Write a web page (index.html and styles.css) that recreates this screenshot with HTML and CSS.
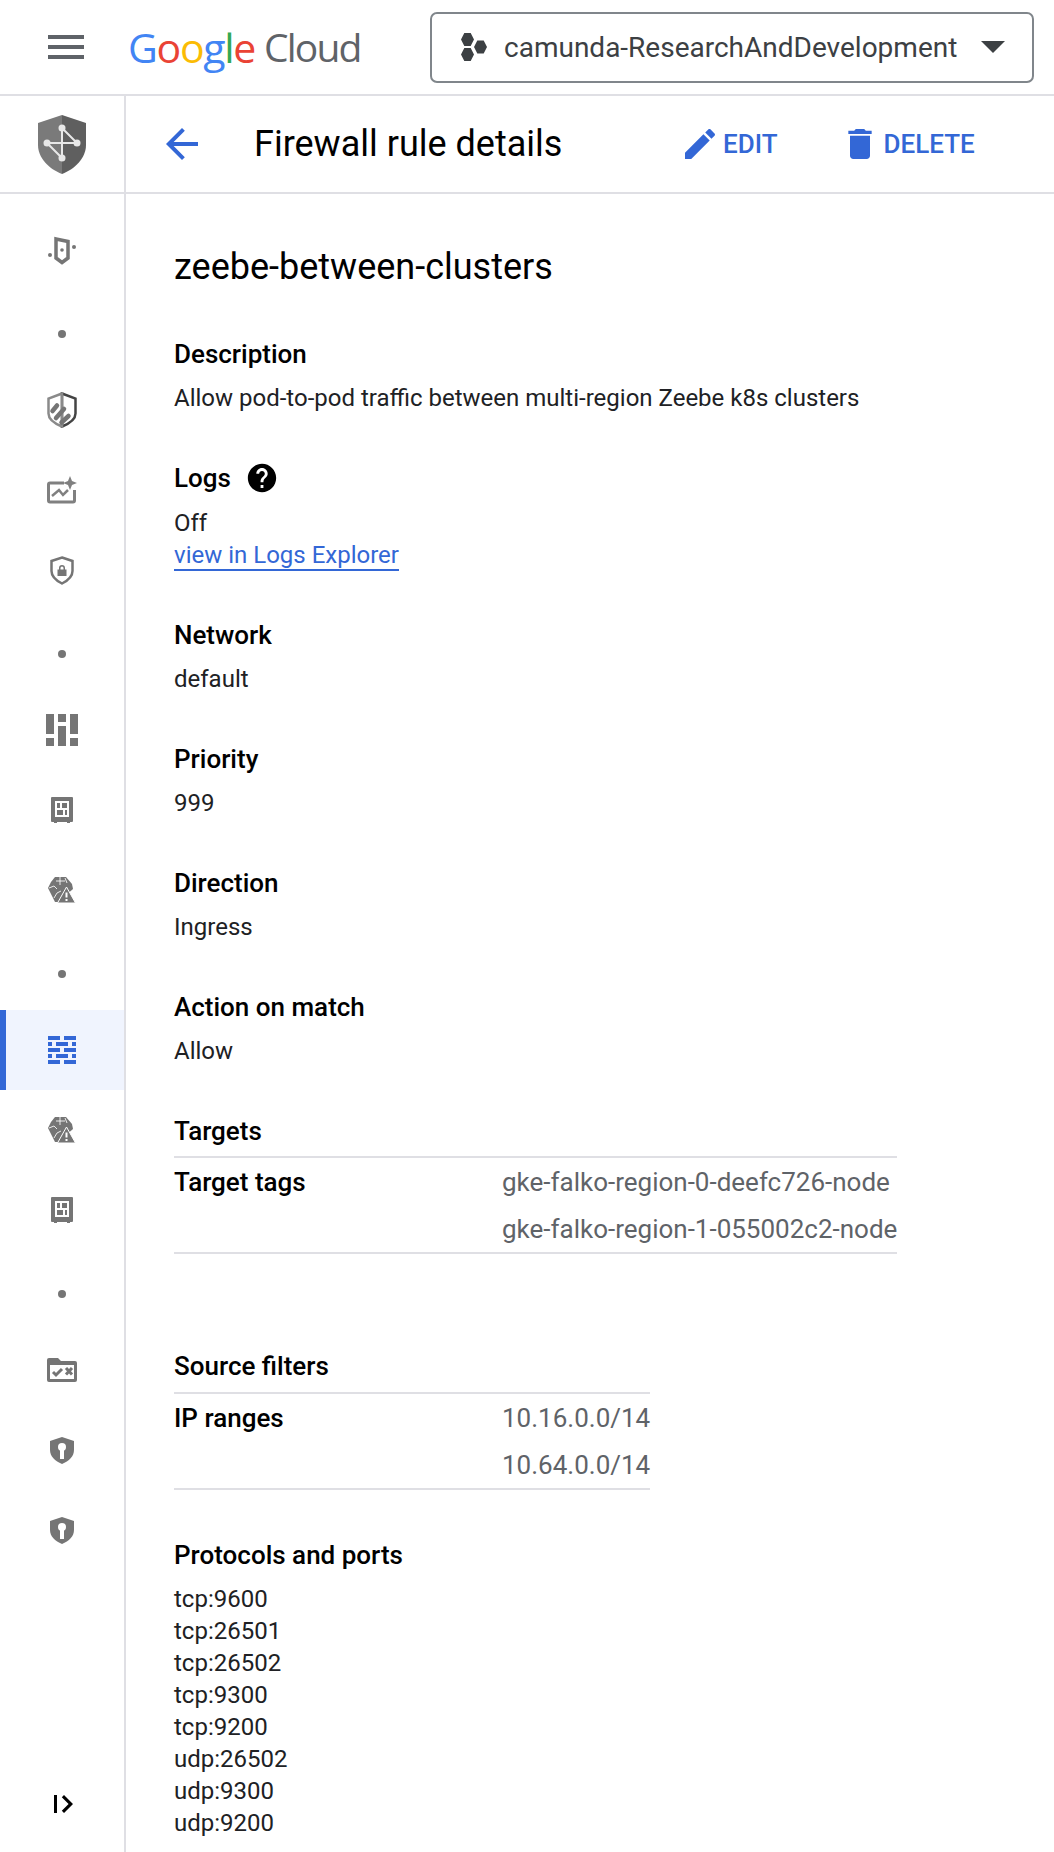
FILE: index.html
```html
<!DOCTYPE html>
<html lang="en">
<head>
    <meta charset="UTF-8">
    <title>Firewall rule details</title>
    <link rel="stylesheet" href="styles.css">
</head>
<body>
    <svg class="defs" width="0" height="0">
        <symbol id="brain-warn" viewBox="0 0 28 28">
            <path d="M7 1h11l6 7 1 5-15 13H7L0 12l3-6z" fill="#757575"/>
            <path d="M1 12l5-2 3 3M12 1v8M8 5h9M6 22l3-5 4-2M17 2l2 5" stroke="#fff" stroke-width="1" fill="none" opacity="0.85"/>
            <path d="M18.500 11L27.500 27H9.500z" fill="#757575" stroke="#fff" stroke-width="1"/>
            <path d="M17.500 16.500h2v5h-2zM17.500 23h2v2h-2z" fill="#fff"/>
        </symbol>
        <symbol id="vault" viewBox="0 0 22 26">
            <path d="M1 0h20a1 1 0 011 1v23a1 1 0 01-1 1h-2v1h-3v-1H6v1H3v-1H1a1 1 0 01-1-1V1a1 1 0 011-1z" fill="#757575"/>
            <path d="M4 4h14v16H4z" fill="#fff"/>
            <path d="M6 6h3v5H6zM11 6h5v5h-5zM6 13h6v5H6zM14 13h2v5h-2z" fill="#757575"/>
        </symbol>
        <symbol id="key-shield" viewBox="0 0 24 27">
            <path d="M12 0l12 4v9c0 6.500-5 11-12 14C5 24 0 19.500 0 13V4z" fill="#757575"/>
            <circle cx="12" cy="10" r="4" fill="#fff"/>
            <path d="M10 12h4v10h-4z" fill="#fff"/>
        </symbol>
    </svg>

    <div class="page">
        <header class="topbar">
            <div class="hamburger"><span></span><span></span><span></span></div>
            <div class="logo">
                <span class="logo-google"><span class="c-blue">G</span><span class="c-red">o</span><span class="c-yellow">o</span><span class="c-blue">g</span><span class="c-green">l</span><span class="c-red">e</span></span>
                <span class="logo-cloud">Cloud</span>
            </div>
            <div class="project">
                <svg class="project-icon" width="26" height="28" viewBox="0 0 26 28">
                    <path d="M3.300 0h6.400L13 6.500 9.700 13H3.300L0 6.500zM3.300 15h6.400l3.300 6.500L9.700 28H3.300L0 21.500zM16.300 7.500h6.400l3.300 6.500-3.300 6.500h-6.400L13 14z" fill="#3c4043"/>
                </svg>
                <span class="project-name">camunda-ResearchAndDevelopment</span>
                <span class="caret"></span>
            </div>
        </header>

        <div class="subhead">
            <div class="brand-cell">
                <svg width="48" height="59" viewBox="0 0 48 59">
                    <path d="M24 0l24 8v22c0 13-11 24-24 29z" fill="#5f5f5f"/>
                    <path d="M24 0L0 8v22c0 13 11 24 24 29z" fill="#7a7a7a"/>
                    <path d="M24 13l15 15H9l15 15V13" fill="none" stroke="#e8e8e8" stroke-width="2"/>
                    <circle cx="24" cy="13" r="3.500" fill="#e8e8e8"/>
                    <circle cx="39" cy="28" r="3.500" fill="#e8e8e8"/>
                    <circle cx="9" cy="28" r="3.500" fill="#e8e8e8"/>
                    <circle cx="24" cy="43" r="3.500" fill="#e8e8e8"/>
                </svg>
            </div>
            <div class="subhead-main">
                <svg class="back" width="48" height="48" viewBox="0 0 24 24"><path d="M20 11H7.830l5.590-5.590L12 4l-8 8 8 8 1.410-1.410L7.830 13H20v-2z"/></svg>
                <h1 class="page-title">Firewall rule details</h1>
                <a class="action action-edit">
                    <svg width="40" height="40" viewBox="0 0 24 24"><path d="M3 17.250V21h3.750L17.810 9.940l-3.750-3.750L3 17.250zM20.710 7.040c.39-.39.39-1.020 0-1.410l-2.340-2.340c-.39-.39-1.020-.39-1.410 0l-1.830 1.830 3.750 3.750 1.830-1.830z"/></svg>
                    EDIT
                </a>
                <a class="action action-delete">
                    <svg width="40" height="40" viewBox="0 0 24 24"><path d="M6 19c0 1.100.9 2 2 2h8c1.100 0 2-.9 2-2V7H6v12zM19 4h-3.500l-1-1h-5l-1 1H5v2h14V4z"/></svg>
                    DELETE
                </a>
            </div>
        </div>

        <div class="body">
            <nav class="sidebar">
                <div class="nav-item">
                    <svg width="30" height="30" viewBox="0 0 30 30">
                        <path d="M9 4l12 2.500V23l-6 4.500L9 23z" fill="none" stroke="#757575" stroke-width="3.500"/>
                        <circle cx="15" cy="15" r="1.800" fill="#757575"/><circle cx="3" cy="20" r="2" fill="#757575"/><circle cx="27" cy="12" r="2" fill="#757575"/>
                    </svg>
                </div>
                <div class="nav-item nav-dot"><span></span></div>
                <div class="nav-item">
                    <svg width="30" height="36" viewBox="0 0 30 36">
                        <path d="M15 1.500L28.500 6.500v15c0 6-6 10-13.500 13V1.500z" fill="none" stroke="#444" stroke-width="2.500"/>
                        <path d="M15 1.500L1.500 6.500v15c0 6 6 10 13.500 13V1.500z" fill="none" stroke="#8a8a8a" stroke-width="2.500"/>
                        <path d="M5.500 19L10 13.500M9 26L17 17M14.500 30.500l7-6.500" stroke="#757575" stroke-width="4.500" stroke-linecap="round"/>
                    </svg>
                </div>
                <div class="nav-item">
                    <svg width="30" height="28" viewBox="0 0 30 28">
                        <path d="M17 7H3a1.500 1.500 0 00-1.500 1.500v16A1.500 1.500 0 003 26h23a1.500 1.500 0 001.500-1.500V14" fill="none" stroke="#808080" stroke-width="3"/>
                        <path d="M5 20l7-6 4 5 5-5" fill="none" stroke="#808080" stroke-width="2.500"/>
                        <path d="M23 0l2 5 5 2-5 2-2 5-2-5-5-2 5-2z" fill="#808080"/>
                    </svg>
                </div>
                <div class="nav-item">
                    <svg width="24" height="29" viewBox="0 0 24 29">
                        <path d="M12 1.500l10.500 3.500v10c0 6-4.500 9.500-10.500 12.500C6 24.500 1.500 21 1.500 15V5z" fill="none" stroke="#757575" stroke-width="2.500"/>
                        <path d="M7.500 13.500h9V20h-9zM9 13.500V12a3 3 0 016 0v1.500h-1.500V12a1.500 1.500 0 00-3 0v1.500z" fill="#757575"/>
                    </svg>
                </div>
                <div class="nav-item nav-dot"><span></span></div>
                <div class="nav-item">
                    <svg width="32" height="32" viewBox="0 0 32 32">
                        <path d="M0 0h8v20H0zM12 0h8v8h-8zM24 0h8v20h-8zM12 12h8v20h-8zM0 24h8v8H0zM24 24h8v8h-8z" fill="#757575"/>
                    </svg>
                </div>
                <div class="nav-item"><svg width="22" height="26"><use href="#vault"/></svg></div>
                <div class="nav-item"><svg width="28" height="28"><use href="#brain-warn"/></svg></div>
                <div class="nav-item nav-dot"><span></span></div>
                <div class="nav-item nav-active">
                    <svg width="28" height="28" viewBox="0 0 28 28">
                        <path d="M0 0h12v4H0zM16 0h12v4H16zM0 6h4v4H0zM8 6h12v4H8zM24 6h4v4h-4zM0 12h12v4H0zM16 12h12v4H16zM0 18h4v4H0zM8 18h12v4H8zM24 18h4v4h-4zM0 24h12v4H0zM16 24h12v4H16z" fill="#3367d6"/>
                    </svg>
                </div>
                <div class="nav-item"><svg width="28" height="28"><use href="#brain-warn"/></svg></div>
                <div class="nav-item"><svg width="22" height="26"><use href="#vault"/></svg></div>
                <div class="nav-item nav-dot"><span></span></div>
                <div class="nav-item">
                    <svg width="30" height="24" viewBox="0 0 30 24">
                        <path d="M2 0h9l3 3h14a2 2 0 012 2v17a2 2 0 01-2 2H2a2 2 0 01-2-2V2a2 2 0 012-2zM3 7v14h24V7z" fill="#757575" fill-rule="evenodd"/>
                        <path d="M6 14l3 3 6-6M19 10l6 6.500M25 10l-6 6.500" stroke="#757575" stroke-width="3" fill="none"/>
                    </svg>
                </div>
                <div class="nav-item"><svg width="24" height="27"><use href="#key-shield"/></svg></div>
                <div class="nav-item"><svg width="24" height="27"><use href="#key-shield"/></svg></div>
                <div class="sidebar-foot">
                    <svg width="20" height="18" viewBox="0 0 20 18">
                        <path d="M0 0h3v18H0zM10 0l9 9-9 9-2.200-2.200L14.600 9 7.800 2.200z" fill="#000"/>
                    </svg>
                </div>
            </nav>

            <main class="content">
                <h2 class="rule-name">zeebe-between-clusters</h2>

                <section class="block block-first">
                    <div class="label">Description</div>
                    <div class="value">Allow pod-to-pod traffic between multi-region Zeebe k8s clusters</div>
                </section>

                <section class="block">
                    <div class="label label-help">Logs
                        <svg width="34" height="34" viewBox="0 0 24 24"><path d="M12 2C6.480 2 2 6.480 2 12s4.480 10 10 10 10-4.480 10-10S17.520 2 12 2zm1 17h-2v-2h2v2zm2.070-7.750l-.9.920C13.450 12.900 13 13.500 13 15h-2v-.5c0-1.100.45-2.100 1.170-2.830l1.240-1.260c.37-.36.59-.86.59-1.410 0-1.100-.9-2-2-2s-2 .9-2 2H8c0-2.210 1.790-4 4-4s4 1.790 4 4c0 .88-.36 1.680-.93 2.250z"/></svg>
                    </div>
                    <div class="value">Off</div>
                    <div class="value-line"><a class="link">view in Logs Explorer</a></div>
                </section>

                <section class="block">
                    <div class="label">Network</div>
                    <div class="value">default</div>
                </section>

                <section class="block">
                    <div class="label">Priority</div>
                    <div class="value">999</div>
                </section>

                <section class="block">
                    <div class="label">Direction</div>
                    <div class="value">Ingress</div>
                </section>

                <section class="block">
                    <div class="label">Action on match</div>
                    <div class="value">Allow</div>
                </section>

                <section class="block-table block-targets">
                    <div class="label">Targets</div>
                    <table class="kv">
                        <tr><th>Target tags</th><td>gke-falko-region-0-deefc726-node</td></tr>
                        <tr class="kv-last"><th></th><td>gke-falko-region-1-055002c2-node</td></tr>
                    </table>
                </section>

                <section class="block-table block-source">
                    <div class="label">Source filters</div>
                    <table class="kv">
                        <tr><th>IP ranges</th><td>10.16.0.0/14</td></tr>
                        <tr class="kv-last"><th></th><td>10.64.0.0/14</td></tr>
                    </table>
                </section>

                <section class="block">
                    <div class="label">Protocols and ports</div>
                    <div class="value">tcp:9600</div>
                    <div class="value-line">tcp:26501</div>
                    <div class="value-line">tcp:26502</div>
                    <div class="value-line">tcp:9300</div>
                    <div class="value-line">tcp:9200</div>
                    <div class="value-line">udp:26502</div>
                    <div class="value-line">udp:9300</div>
                    <div class="value-line">udp:9200</div>
                </section>
            </main>
        </div>
    </div>
</body>
</html>
```

FILE: styles.css
```css
html, body {
    margin: 0;
    padding: 0;
    background: #fff;
}
body {
    font-family: Roboto, "Liberation Sans", sans-serif;
    color: #202124;
}
.defs {
    position: absolute;
}
.page {
    width: 1054px;
    height: 1852px;
    overflow: hidden;
    display: flex;
    flex-direction: column;
}

/* top bar */
.topbar {
    height: 94px;
    flex: none;
    display: flex;
    align-items: center;
    border-bottom: 2px solid #dfdfe4;
}
.hamburger {
    margin-left: 48px;
    width: 36px;
    height: 24px;
    display: flex;
    flex-direction: column;
    justify-content: space-between;
}
.hamburger span {
    height: 4px;
    background: #5f6368;
}
.logo {
    margin-left: 44px;
    width: 302px;
    flex: none;
    display: flex;
    gap: 9px;
    font-family: "Open Sans", sans-serif;
    font-size: 41px;
    line-height: 50px;
    letter-spacing: -1.3px;
}
.logo-cloud {
    color: #5f6368;
    font-size: 39px;
    letter-spacing: -1.8px;
}
.c-blue { color: #4285f4; }
.c-red { color: #ea4335; }
.c-yellow { color: #fbbc05; }
.c-green { color: #34a853; }
.project {
    box-sizing: border-box;
    width: 604px;
    height: 71px;
    flex: none;
    border: 2px solid #80868b;
    border-radius: 7px;
    display: flex;
    align-items: center;
    padding-left: 29px;
}
.project-name {
    margin-left: 17px;
    font-size: 28px;
    color: #3c4043;
    white-space: nowrap;
}
.caret {
    margin-left: 24px;
    width: 0;
    height: 0;
    border-left: 12px solid transparent;
    border-right: 12px solid transparent;
    border-top: 12px solid #3c4043;
}

/* sub header */
.subhead {
    height: 96px;
    flex: none;
    display: flex;
    border-bottom: 2px solid #dfdfe4;
}
.brand-cell {
    width: 124px;
    flex: none;
    border-right: 2px solid #dfdfe4;
    display: flex;
    align-items: center;
    justify-content: center;
}
.subhead-main {
    flex: 1;
    display: flex;
    align-items: center;
}
.back {
    margin-left: 32px;
    fill: #3367d6;
}
.page-title {
    margin: 0 0 0 48px;
    width: 426px;
    flex: none;
    font-size: 36px;
    font-weight: 400;
    color: #000;
    white-space: nowrap;
}
.action {
    display: flex;
    align-items: center;
    gap: 3px;
    font-size: 26px;
    font-weight: 500;
    color: #3367d6;
}
.action svg {
    fill: #3367d6;
}
.action-delete {
    margin-left: 62px;
    gap: 4px;
}

/* body */
.body {
    flex: 1;
    display: flex;
    min-height: 0;
}
.sidebar {
    width: 124px;
    flex: none;
    border-right: 2px solid #dfdfe4;
    padding-top: 16px;
    display: flex;
    flex-direction: column;
}
.nav-item {
    height: 80px;
    flex: none;
    display: flex;
    align-items: center;
    justify-content: center;
}
.nav-dot {
    padding-top: 8px;
    box-sizing: border-box;
}
.nav-dot span {
    width: 8px;
    height: 8px;
    border-radius: 50%;
    background: #757575;
}
.nav-active {
    box-sizing: border-box;
    background: #f0f4fe;
    border-left: 6px solid #3367d6;
    padding-right: 6px;
}
.sidebar-foot {
    margin-top: auto;
    height: 57px;
    display: flex;
    justify-content: center;
    padding-left: 3px;
}

.content {
    flex: 1;
    padding: 53px 0 0 48px;
}
.rule-name {
    margin: 0 0 51px;
    font-size: 36px;
    line-height: 40px;
    font-weight: 400;
    color: #000;
}
.block {
    margin-bottom: 48px;
}
.block-first {
    margin-bottom: 47px;
}
.label {
    font-size: 26px;
    line-height: 32px;
    font-weight: 500;
    color: #000;
}
.label-help {
    display: flex;
    align-items: center;
    gap: 14px;
}
.value {
    margin-top: 12px;
    font-size: 24px;
    line-height: 32px;
}
.value-line {
    font-size: 24px;
    line-height: 32px;
}
.link {
    color: #3367d6;
    border-bottom: 2px solid #3367d6;
}

/* key value tables */
.block-table .label {
    margin-bottom: 9px;
}
.block-targets {
    margin-bottom: 96px;
}
.block-source .label {
    margin-bottom: 10px;
}
.block-source {
    margin-bottom: 49px;
}
.kv {
    border-collapse: separate;
    border-spacing: 0;
    border-top: 2px solid #dfdfe4;
    border-bottom: 2px solid #dfdfe4;
}
.kv th {
    width: 328px;
    padding: 0;
    height: 48px;
    text-align: left;
    font-size: 26px;
    font-weight: 500;
    color: #000;
}
.kv td {
    padding: 0;
    height: 48px;
    font-size: 26px;
    color: #5f6368;
    white-space: nowrap;
}
.kv-last th, .kv-last td {
    height: 46px;
}
```
